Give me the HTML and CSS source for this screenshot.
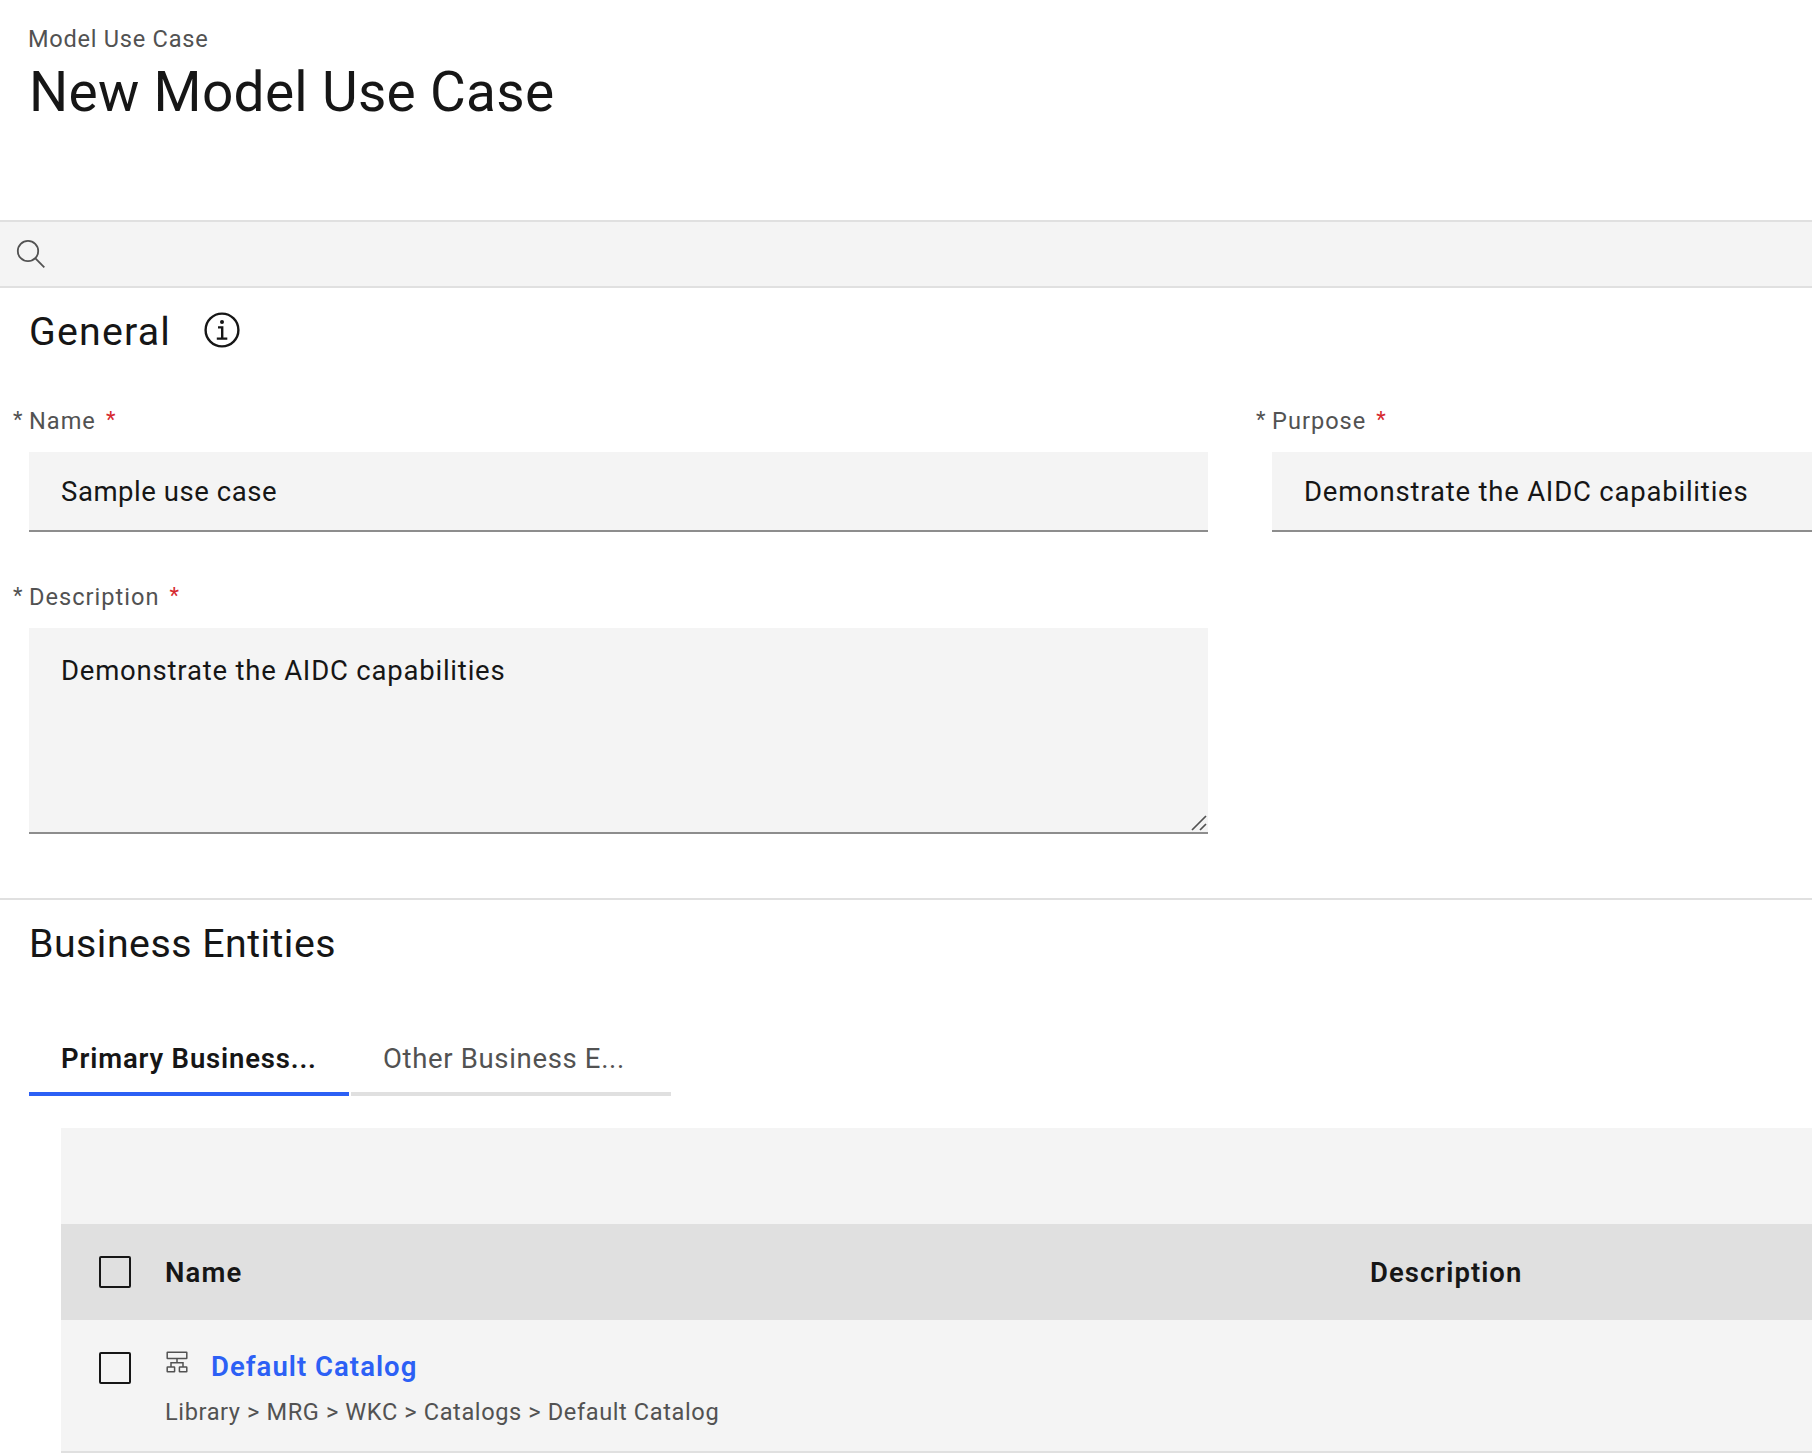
FILE: index.html
```html
<!DOCTYPE html>
<html lang="en">
<head>
<meta charset="utf-8">
<title>New Model Use Case</title>
<link rel="stylesheet" href="styles.css">
</head>
<body>
<header class="page-header">
  <div class="eyebrow">Model Use Case</div>
  <h1 class="page-title">New Model Use Case</h1>
</header>

<div class="search-bar">
  <svg class="search-icon" width="32" height="32" viewBox="0 0 32 32" fill="none" stroke="#525252" stroke-width="1.8">
    <circle cx="13" cy="13" r="10.2"/>
    <path d="M20.4 20.4 29.3 29.3"/>
  </svg>
</div>

<main>
  <section class="section section-general">
    <div class="section-head">
      <h2 class="section-title title-general">General</h2>
      <svg class="info-icon" width="36" height="36" viewBox="0 0 36 36" fill="none" stroke="#161616" stroke-width="2.4">
        <circle cx="18" cy="18" r="16.4"/>
        <path d="M14 15.4h4.2v11M12.8 26.6h10.5"/>
        <circle cx="18" cy="10" r="2" fill="#161616" stroke="none"/>
      </svg>
    </div>
    <div class="form-grid">
      <div class="field">
        <label class="label" for="name"><span class="mark">*</span><span class="label-text">Name</span><span class="required">*</span></label>
        <input class="input input-name" id="name" type="text" value="Sample use case">
      </div>
      <div class="field">
        <label class="label" for="purpose"><span class="mark">*</span><span class="label-text">Purpose</span><span class="required">*</span></label>
        <input class="input" id="purpose" type="text" value="Demonstrate the AIDC capabilities">
      </div>
      <div class="field">
        <label class="label" for="description"><span class="mark">*</span><span class="label-text">Description</span><span class="required">*</span></label>
        <div class="textarea-wrap">
          <textarea class="textarea" id="description">Demonstrate the AIDC capabilities</textarea>
          <svg class="grip" width="16" height="16" viewBox="0 0 16 16" fill="none" stroke="#525252" stroke-width="1.7">
            <path d="M1 15 15 1M9 15l6-6"/>
          </svg>
        </div>
      </div>
    </div>
  </section>

  <section class="section section-entities">
    <h2 class="section-title title-entities">Business Entities</h2>
    <nav class="tabs">
      <a class="tab tab-active">Primary Business...</a>
      <a class="tab">Other Business E...</a>
    </nav>
    <div class="table">
      <div class="toolbar"></div>
      <div class="row row-head">
        <span class="checkbox"></span>
        <div class="cell-name head-name">Name</div>
        <div class="head-description">Description</div>
      </div>
      <div class="row row-body">
        <span class="checkbox"></span>
        <div class="cell-name">
          <div class="entity">
            <svg class="entity-icon" width="24" height="24" viewBox="0 0 24 24" fill="none" stroke="#525252" stroke-width="1.5">
              <rect x="2.2" y="2.2" width="19.6" height="6.4" rx=".4"/>
              <path d="M12 8.6v4.2M6 17v-4.2h12V17"/>
              <rect x="2.2" y="17" width="7.4" height="4.8" rx=".4"/>
              <rect x="14.4" y="17" width="7.4" height="4.8" rx=".4"/>
            </svg>
            <a class="entity-link">Default Catalog</a>
          </div>
          <div class="entity-path">Library &gt; MRG &gt; WKC &gt; Catalogs &gt; Default Catalog</div>
        </div>
      </div>
    </div>
  </section>
</main>
</body>
</html>
```
FILE: styles.css
```css
* {
  box-sizing: border-box;
}

body {
  margin: 0;
  height: 1456px;
  overflow: hidden;
  background: #fff;
  color: #161616;
  font-family: Roboto, "Noto Sans", sans-serif;
  font-size: 27.5px;
}

h1,
h2 {
  margin: 0;
  font-weight: 400;
}

.page-header {
  height: 220px;
  padding: 23px 28px 0;
}

.eyebrow {
  font-size: 23.6px;
  line-height: 32px;
  letter-spacing: .73px;
  color: #525252;
}

.page-title {
  margin: 5px 0 0 1px;
  font-size: 55px;
  line-height: 64px;
  letter-spacing: .3px;
}

.search-bar {
  display: flex;
  align-items: center;
  height: 68px;
  padding-left: 15px;
  background: #f4f4f4;
  border-top: 2px solid #e0e0e0;
  border-bottom: 2px solid #e0e0e0;
}

.section {
  padding: 20px 0 0 29px;
}

.section-general {
  height: 612px;
  border-bottom: 2px solid #e0e0e0;
}

.section-head {
  display: flex;
  align-items: center;
}

.section-title {
  font-size: 39.3px;
  line-height: 48px;
}

.title-general {
  letter-spacing: 1.2px;
}

.title-entities {
  letter-spacing: .48px;
}

.info-icon {
  margin: -4px 0 0 33px;
}

.form-grid {
  display: grid;
  grid-template-columns: 1179px 1fr;
  gap: 53px 64px;
  margin-top: 53px;
}

.label {
  display: flex;
  margin-left: -16px;
  font-size: 23.6px;
  line-height: 24px;
  letter-spacing: 1px;
  color: #525252;
}

.mark,
.required {
  font-size: 22px;
  line-height: 21px;
}

.mark {
  width: 16px;
}

.required {
  margin-left: 10px;
  color: #d6292f;
}

.input,
.textarea {
  display: block;
  width: 100%;
  margin: 0;
  border: 0;
  border-bottom: 2px solid #8d8d8d;
  border-radius: 0;
  outline: 0;
  background: #f4f4f4;
  color: #161616;
  font: inherit;
  letter-spacing: .79px;
}

.input {
  height: 80px;
  margin-top: 19px;
  padding: 1px 32px 0;
}

.input-name {
  letter-spacing: .55px;
}

.textarea-wrap {
  position: relative;
  margin-top: 19px;
}

.textarea {
  height: 206px;
  padding: 23px 32px 0;
  line-height: 40px;
  resize: none;
  overflow: hidden;
}

.grip {
  position: absolute;
  right: 1px;
  bottom: 3px;
}

.tabs {
  display: flex;
  gap: 2px;
  margin-top: 64px;
}

.tab {
  width: 320px;
  height: 64px;
  padding: 9px 32px 0;
  border-bottom: 4px solid #e0e0e0;
  line-height: 36px;
  letter-spacing: .66px;
  white-space: nowrap;
  color: #525252;
}

.tab-active {
  border-color: #2c60f5;
  font-weight: 600;
  letter-spacing: .83px;
  color: #161616;
}

.table {
  margin: 32px 0 0 32px;
  background: #f4f4f4;
}

.toolbar {
  height: 96px;
}

.row {
  display: flex;
  padding-left: 38px;
}

.row-head {
  align-items: center;
  height: 96px;
  background: #e0e0e0;
  font-weight: 600;
  line-height: 36px;
}

.row-body {
  height: 133px;
  padding-top: 29px;
  border-bottom: 2px solid #e0e0e0;
}

.checkbox {
  flex: none;
  width: 32px;
  height: 32px;
  border: 2px solid #161616;
  border-radius: 2px;
}

.row-body .checkbox {
  margin-top: 3px;
}

.cell-name {
  width: 1205px;
  margin-left: 34px;
}

.head-name {
  padding-top: 1px;
  letter-spacing: 1.1px;
}

.head-description {
  padding-top: 1px;
  letter-spacing: 1.03px;
}

.entity {
  display: flex;
  line-height: 36px;
}

.entity-icon {
  margin: 1px 22px 0 0;
}

.entity-link {
  color: #2c60f5;
  font-weight: 600;
  letter-spacing: 1.03px;
}

.entity-path {
  margin-top: 15px;
  font-size: 23.6px;
  line-height: 24px;
  letter-spacing: .6px;
  color: #525252;
}
```
